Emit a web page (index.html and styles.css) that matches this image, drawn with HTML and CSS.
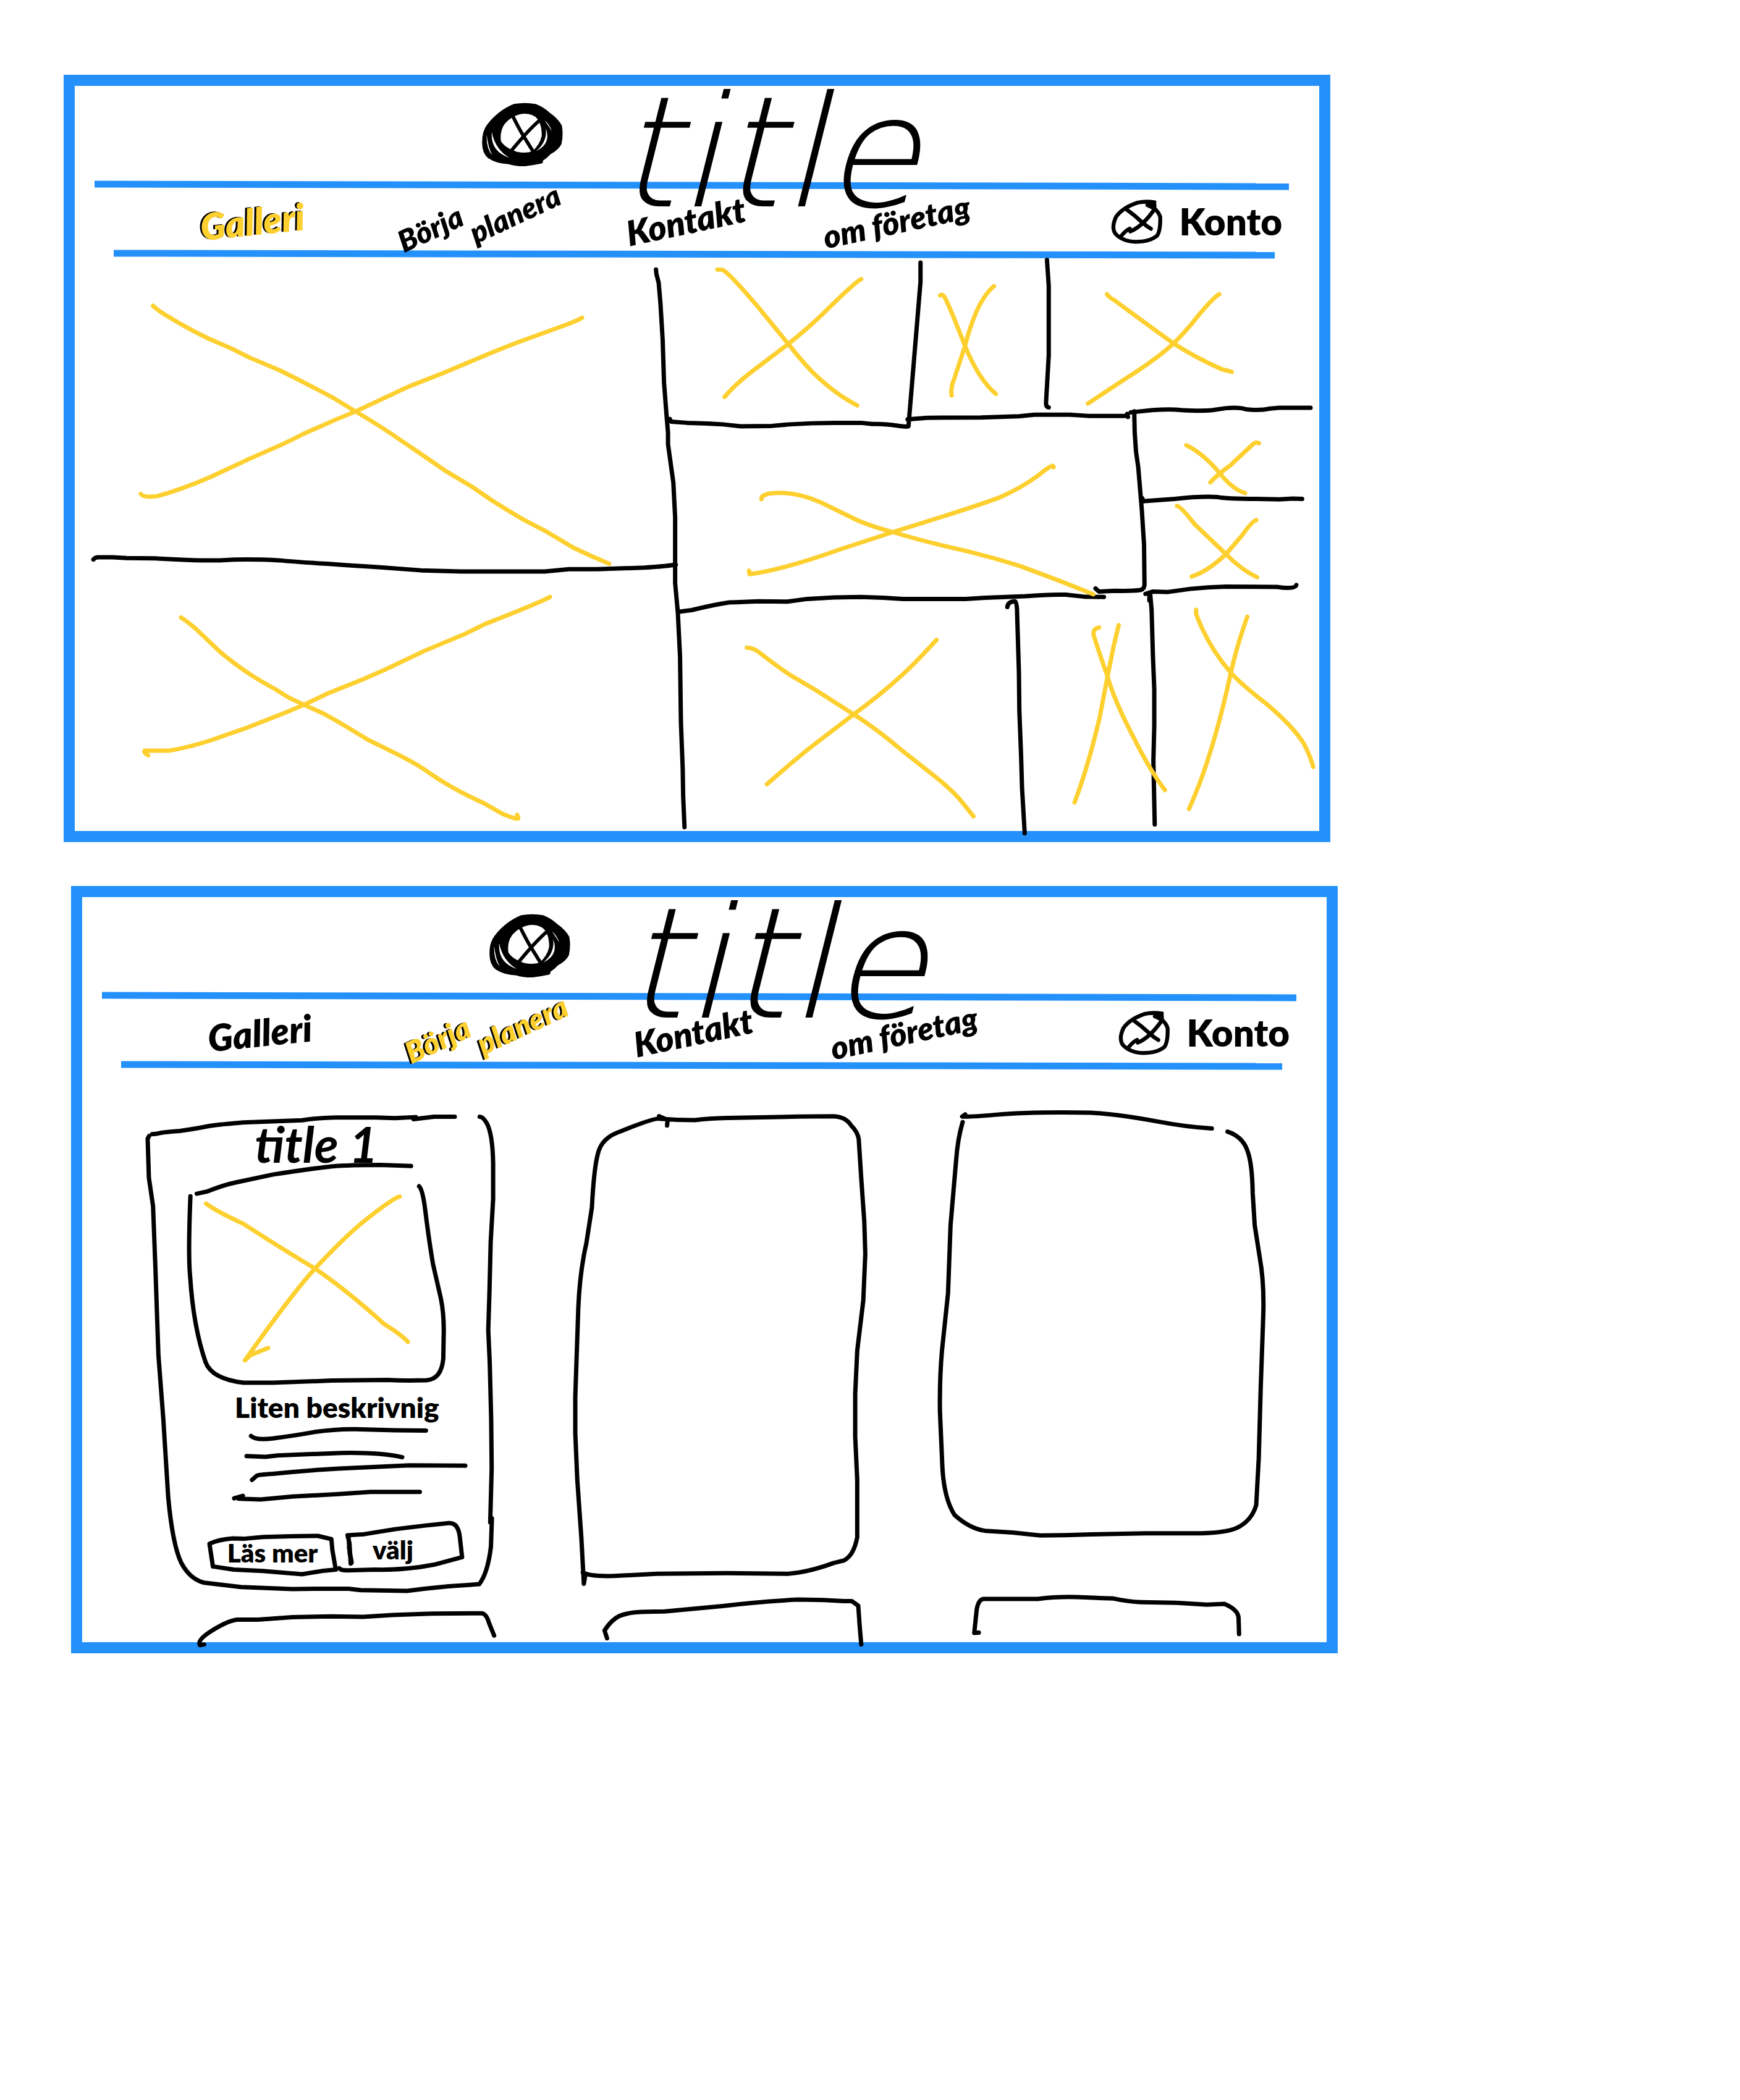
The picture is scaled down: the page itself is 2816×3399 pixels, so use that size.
FILE: index.html
```html
<!DOCTYPE html>
<html lang="sv">
<head>
<meta charset="utf-8">
<meta name="viewport" content="width=device-width, initial-scale=1">
<title>title</title>
<link rel="stylesheet" href="styles.css">
</head>
<body>
<main class="page">

<section class="board" aria-label="Galleri">
  <header class="masthead">
    <svg class="logo" viewBox="0 0 450 390" aria-hidden="true">
      <g id="logo-mark">
        <path fill="#000" fill-rule="evenodd" stroke="none" d="M185 55Q240 45 290 55Q330 70 360 98Q400 125 418 160Q426 205 416 250Q400 280 364 298Q345 318 326 330Q328 344 316 344Q280 352 240 357Q195 358 160 347Q100 345 60 318Q32 295 31 250Q28 190 55 155Q110 85 185 55ZM235 102Q280 102 300 128Q322 160 320 210Q312 250 275 285Q240 296 200 287Q140 268 122 235Q116 185 140 152Q180 106 235 102ZM53 205Q50 270 80 304Q60 265 53 205ZM78 192Q70 285 163 316Q94 275 78 192ZM334 134Q356 150 370 188Q350 156 334 134ZM340 172Q368 248 292 284Q348 240 340 172Z"/>
        <path fill="none" stroke="#000" stroke-width="17" d="M180 115Q210 175 230 208L278 285M315 130Q260 175 170 285"/>
      </g>
    </svg>
    <h1 class="wordmark">title</h1>
  </header>
  <svg class="rule" viewBox="0 0 2014 16" preserveAspectRatio="none" aria-hidden="true"><path d="M32 6L1965 10"/></svg>
  <nav class="nav" aria-label="Huvudmeny">
    <a class="link gallery-link active" href="#galleri" aria-current="page">Galleri</a>
    <a class="link plan-link" href="#planera"><span class="word">Börja</span> <span class="word raised">planera</span></a>
    <a class="link contact-link" href="#kontakt">Kontakt</a>
    <a class="link about-link" href="#foretag">om företag</a>
    <a class="link account-link" href="#konto">
      <svg class="avatar" viewBox="0 0 300 300" aria-hidden="true">
        <path id="avatar-mark" d="M262 58Q215 52 180 60Q105 85 75 130Q52 180 72 210Q105 248 170 250Q240 250 275 220Q292 195 290 130Q285 110 262 88L228 72L262 70L262 92Q205 175 145 200L142 186Q118 198 96 228M128 94Q165 120 202 155Q220 172 245 187"/>
      </svg>
      Konto
    </a>
  </nav>
  <svg class="rule" viewBox="0 0 2014 16" preserveAspectRatio="none" aria-hidden="true"><path d="M63 5L1942 8"/></svg>
  <svg class="gallery" id="galleri" viewBox="0 0 2014 924" role="img" aria-label="Bildgalleri">
    <g transform="translate(-31 -21) scale(.65689 .625)">
      <path class="ink" d="M93 809Q97 803 105 803L140 803L175 805L245 806L305 809Q350 812 405 811L440 809Q500 808 550 811Q600 816 670 820Q730 825 800 829Q860 834 900 837L1000 840L1205 840L1265 834L1335 834L1450 830Q1510 826 1528 822"/>
      <path class="cross" d="M240 152Q250 162 265 172Q320 208 375 236L430 261L480 287L550 318Q620 354 685 391L738 425Q800 463 850 500L895 532L960 579L1025 620L1075 656Q1120 686 1155 707L1210 737Q1240 756 1275 778Q1320 801 1364 820"/>
      <path class="cross" d="M1297 183Q1280 193 1250 204L1140 246Q1090 266 1050 284L955 326L870 361L740 425L685 449L610 484Q575 503 545 517L480 547L380 596Q310 628 250 645Q215 649 210 639"/>
      <path class="cross" d="M309 959Q325 970 345 988L405 1048Q440 1079 480 1107Q505 1124 540 1144L575 1167L612 1185L660 1208Q690 1224 770 1276L830 1307Q890 1338 920 1361Q960 1391 1015 1420L1055 1440L1100 1467Q1140 1484 1140 1479L1137 1470"/>
      <path class="cross" d="M1218 906Q1180 926 1060 975L1010 1001L910 1045L810 1095L760 1118L670 1156L612 1185L565 1206L470 1245L380 1278Q330 1295 280 1304L219 1304Q217 1310 228 1316"/>
    </g>
    <g transform="translate(919 -21) scale(.72066 .625)">
      <path class="ink" d="M30 58L31 70L36 92L40 145L45 240L48 350L54 440L57 480L57 510L69 610L73 700L73 870L79 945L84 1060L86 1230L90 1350L91 1420L94 1502"/>
      <path class="ink" d="M61 445L64 452L100 455Q150 456 180 459L220 464L290 463L330 459Q380 455 430 455L490 455L515 458Q545 457 570 462Q592 466 597 464L624 90L624 40"/>
      <path class="ink" d="M595 446L640 442L760 441L845 438L880 434L960 434L1000 437L1085 437L1088 432L1090 440M1096 428L1120 425L1145 422Q1185 419 1210 422Q1255 425 1280 422L1310 417Q1340 414 1355 420Q1385 424 1410 418L1430 416L1500 416"/>
      <path class="ink" d="M908 33L912 100L912 280L906 400Q905 414 912 415"/>
      <path class="ink" d="M1104 425L1105 480L1108 530L1113 570L1121 680L1126 770L1127 870Q1128 885 1118 888Q1100 891 1060 890L1025 892L1017 884M1122 650L1124 658L1195 652Q1250 645 1290 647Q1310 652 1380 652L1430 653L1460 651L1481 652"/>
      <path class="ink" d="M83 944L110 940Q160 926 195 920Q225 919 260 917L325 918L370 911Q430 906 490 906L540 908L585 911L725 911L770 908L860 904Q910 899 950 900L990 905L1036 906"/>
      <path class="ink" d="M1129 898L1145 892L1180 893L1230 885Q1270 880 1310 879L1425 880Q1465 887 1468 875M1140 900L1143 940L1146 1060L1149 1145L1149 1240L1147 1330L1150 1495M1138 915L1138 895"/>
      <path class="ink" d="M819 932Q820 918 836 917Q841 920 841 950L845 1100L846 1200L850 1320L852 1400L858 1518"/>
      <path class="cross" d="M168 58L180 59Q195 68 260 156L328 252Q355 292 380 322Q430 379 482 410M491 83Q480 87 400 178Q370 211 328 250L240 327Q205 359 184 388"/>
      <path class="cross" d="M668 125Q675 120 680 134Q690 155 724 256Q755 343 793 380M789 101Q750 138 724 256L700 340Q691 365 694 384"/>
      <path class="cross" d="M1043 122Q1046 129 1060 138Q1160 223 1193 250Q1240 285 1300 316L1323 323M1295 122Q1285 127 1250 174Q1215 226 1185 257Q1150 293 1080 344L1000 405"/>
      <path class="cross" d="M267 653Q265 643 285 638Q340 630 400 661L480 706Q510 722 562 738Q630 762 720 785Q800 808 850 827Q940 865 1012 899M923 570L921 566Q910 570 890 590Q850 624 800 649Q750 671 562 738L440 784Q320 834 240 847L239 838"/>
      <path class="cross" d="M1221 513Q1260 535 1297 587Q1325 627 1353 637M1384 508Q1378 503 1370 511L1320 565Q1290 590 1275 609M1200 670Q1208 671 1240 718L1310 795Q1345 836 1380 855M1378 707Q1370 708 1345 748L1310 795Q1270 839 1233 853"/>
      <path class="cross" d="M234 1037Q247 1037 260 1048Q300 1084 330 1107L390 1148L474 1210Q520 1243 580 1301L660 1374Q700 1411 720 1441L743 1474M660 1017Q610 1080 580 1111Q530 1163 474 1210L390 1284Q350 1319 279 1391"/>
      <path class="cross" d="M1025 985Q1010 988 1013 1005Q1020 1032 1044 1112Q1060 1176 1100 1264Q1140 1357 1173 1406M1069 979L1058 1032L1044 1112L1026 1220Q1000 1347 970 1438"/>
      <path class="cross" d="M1243 939L1243 950Q1270 1035 1321 1102Q1340 1128 1400 1182Q1460 1240 1485 1286Q1500 1320 1506 1346M1358 957Q1335 1030 1321 1102Q1280 1320 1227 1455"/>
    </g>
  </svg>
</section>

<section class="board second" aria-label="Börja planera">
  <header class="masthead">
    <svg class="logo" viewBox="0 0 450 390" aria-hidden="true"><use href="#logo-mark"/></svg>
    <h1 class="wordmark">title</h1>
  </header>
  <svg class="rule" viewBox="0 0 2014 16" preserveAspectRatio="none" aria-hidden="true"><path d="M32 6L1965 10"/></svg>
  <nav class="nav" aria-label="Huvudmeny">
    <a class="link gallery-link" href="#galleri">Galleri</a>
    <a class="link plan-link active" href="#planera" aria-current="page"><span class="word">Börja</span> <span class="word raised">planera</span></a>
    <a class="link contact-link" href="#kontakt">Kontakt</a>
    <a class="link about-link" href="#foretag">om företag</a>
    <a class="link account-link" href="#konto">
      <svg class="avatar" viewBox="0 0 300 300" aria-hidden="true"><use href="#avatar-mark"/></svg>
      Konto
    </a>
  </nav>
  <svg class="rule" viewBox="0 0 2014 16" preserveAspectRatio="none" aria-hidden="true"><path d="M63 5L1942 8"/></svg>
  <div class="cards" id="planera">
    <article class="card">
      <svg class="frame" viewBox="0 0 570 784" preserveAspectRatio="none" aria-hidden="true">
        <g transform="translate(-17 -15) scale(.3954 .574)">
          <path class="ink" d="M66 97L85 96Q110 91 180 88Q250 81 300 74Q350 69 440 64L680 58Q740 51 820 50L980 50L1060 52L1145 49L1136 55L1220 48L1305 48"/>
          <path class="ink" d="M1407 48Q1420 48 1435 65Q1460 95 1462 180L1462 280L1452 400L1447 540L1442 650L1448 740L1454 900L1456 1040L1450 1192L1457 1180L1453 1260Q1440 1335 1405 1366L1280 1372L1180 1379L1110 1385L920 1383L870 1379L740 1379L640 1380L430 1374L280 1362Q220 1352 185 1305Q150 1255 132 1120L112 900L92 720L80 480L70 300L53 220L48 110L54 102"/>
        </g>
      </svg>
      <h2 class="card-title">title 1</h2>
      <svg class="picture" viewBox="0 0 417 356" role="img" aria-label="Bild">
        <g transform="translate(-84 -106) scale(.3954 .574)">
          <path class="ink" d="M249 265L290 259Q360 240 410 233L560 211Q720 194 800 188Q880 184 1000 184L1126 187"/>
          <path class="ink" d="M1159 244Q1172 252 1182 300Q1200 400 1216 464L1248 560Q1260 600 1260 650L1258 730Q1250 788 1190 791Q1100 793 1030 790L800 792L560 798L440 798Q310 787 285 740Q235 640 222 500Q213 440 223 272"/>
          <path class="cross" d="M287 293Q330 315 440 350Q580 413 733 476Q870 541 1015 632Q1090 664 1113 683M1080 273Q1050 278 920 350Q840 397 733 476Q640 546 446 735L470 720L541 700"/>
        </g>
      </svg>
      <p class="caption">Liten beskrivnig</p>
      <svg class="copy" viewBox="0 0 378 117" aria-hidden="true">
        <g transform="translate(-157 -533) scale(.3954 .574)">
          <path class="ink" d="M471 948Q490 961 560 955Q660 946 730 937Q820 928 900 929L1060 932L1187 933M453 1005L530 1007L580 1003L840 996Q1000 994 1090 1008M475 1072L495 1060Q505 1057 560 1055Q700 1045 830 1040L1120 1031L1348 1032M402 1124L438 1117L420 1125L510 1127L640 1119L830 1112L960 1106L1162 1106"/>
        </g>
      </svg>
      <div class="actions">
        <button class="button wide" type="button">
          <svg class="frame" viewBox="0 0 208 87" preserveAspectRatio="none" aria-hidden="true">
            <g transform="translate(-117 -683) scale(.3954 .574)"><path class="ink" d="M315 1316L301 1252Q340 1240 395 1237L440 1238L520 1233L640 1231L745 1230L800 1239L804 1270L818 1325L760 1329L680 1338L520 1329L400 1325L315 1316"/></g>
          </svg>Läs mer</button>
        <button class="button" type="button">
          <svg class="frame" viewBox="0 0 204 87" preserveAspectRatio="none" aria-hidden="true">
            <g transform="translate(-327 -683) scale(.3954 .574)"><path class="ink" d="M879 1308L874 1250L866 1228L935 1225L1060 1211L1180 1201L1280 1194Q1320 1192 1326 1235L1335 1290L1220 1311Q1100 1327 980 1325L870 1327Q840 1328 832 1321M870 1230L875 1280L883 1305L872 1262"/></g>
          </svg>välj</button>
      </div>
    </article>
    <article class="card">
      <svg class="frame" viewBox="0 0 475 784" preserveAspectRatio="none" aria-hidden="true">
        <g transform="translate(-27 -15) scale(.8163 .5804)"><path class="ink" d="M220 72L221 56L204 46L205 53Q195 50 130 87Q90 105 83 150Q75 190 71 300L60 400Q47 480 44 580L38 830L38 930L42 1060L50 1220L55 1350L58 1325L53 1318Q65 1330 115 1328L200 1322L340 1320L460 1322Q500 1318 550 1292L570 1285Q590 1272 597 1220L597 1060L593 940L593 820L597 700L609 560L613 430L611 340L605 220L600 110Q598 90 585 72Q575 48 550 46L480 47L340 51Q300 52 275 57Q240 57 205 53"/></g>
      </svg>
    </article>
    <article class="card">
      <svg class="frame" viewBox="0 0 531 784" preserveAspectRatio="none" aria-hidden="true">
        <g transform="translate(-622 -15) scale(.8163 .5804)"><path class="ink" d="M811 41L805 47Q825 48 870 42Q940 33 1060 36Q1110 40 1190 60Q1250 76 1300 80M1331 89Q1360 102 1370 140Q1380 175 1381 260L1385 350L1395 440Q1404 510 1402 600L1397 800L1393 1000L1388 1130Q1380 1170 1355 1190Q1335 1207 1280 1209L1170 1209L1060 1212Q1010 1215 960 1215L905 1207L850 1202Q820 1196 790 1158Q770 1115 766 1030L761 870Q760 780 765 700L777 540L782 350L793 170Q796 110 806 62"/></g>
      </svg>
    </article>
    <article class="card">
      <svg class="frame" viewBox="0 0 570 73" preserveAspectRatio="none" aria-hidden="true">
        <g transform="translate(-17 -805) scale(.3954 .574)"><path class="ink" d="M279 1536L262 1538Q250 1525 300 1502Q370 1470 415 1466L500 1466L640 1459L800 1457L930 1458L1050 1453L1210 1449L1415 1448Q1435 1450 1445 1475L1466 1511"/></g>
      </svg>
    </article>
    <article class="card">
      <svg class="frame" viewBox="0 0 475 73" preserveAspectRatio="none" aria-hidden="true">
        <g transform="translate(-27 -805) scale(.8163 .5804)"><path class="ink" d="M101 1502L96 1480Q110 1450 125 1440Q145 1428 180 1428L215 1427L330 1412Q400 1400 480 1394L530 1395L570 1398L586 1398L599 1411L602 1470L605 1519"/></g>
      </svg>
    </article>
    <article class="card">
      <svg class="frame" viewBox="0 0 531 73" preserveAspectRatio="none" aria-hidden="true">
        <g transform="translate(-622 -805) scale(.8163 .5804)"><path class="ink" d="M838 1486L829 1487L834 1420Q838 1392 848 1392L955 1392Q1000 1384 1050 1388L1105 1391Q1135 1400 1160 1401L1230 1403L1290 1408L1325 1406Q1352 1422 1353 1445L1354 1490"/></g>
      </svg>
    </article>
  </div>
</section>

</main>
</body>
</html>
```

FILE: styles.css
```css
:root {
  --blue: #2491fb;
  --yellow: #fdd030;
  --ink: #000;
}

* {
  box-sizing: border-box;
}

body {
  margin: 0;
  background: #fff;
  color: var(--ink);
  font-family: Lato, "Open Sans", sans-serif;
}

svg {
  display: block;
  overflow: visible;
}

.page {
  display: flex;
  flex-direction: column;
  gap: 71px;
  padding: 121px 0 121px 103px;
}

.board {
  width: 72.8vw;
  border: 18px solid var(--blue);
}

.second {
  margin-left: 12px;
}

/* Strokes */

.ink,
.cross {
  fill: none;
  stroke: var(--ink);
  stroke-width: 7px;
  stroke-linecap: round;
  stroke-linejoin: round;
  vector-effect: non-scaling-stroke;
}

.cross {
  stroke: var(--yellow);
}

.rule {
  width: 100%;
  height: 16px;
}

.rule path {
  fill: none;
  stroke: var(--blue);
  stroke-width: 11px;
}

/* Header */

.masthead {
  position: relative;
  z-index: 1;
  display: flex;
  align-items: flex-start;
  justify-content: center;
  gap: 78px;
  height: 153px;
  padding-top: 11px;
}

.logo {
  flex: none;
  width: 150px;
  height: 130px;
}

.wordmark {
  margin: 0;
  font-family: "DejaVu Sans Light", "DejaVu Sans", sans-serif;
  font-size: 250px;
  font-style: italic;
  font-weight: 200;
  line-height: 196px;
}

.nav {
  display: grid;
  grid-template-columns: 316fr 418fr 250fr 432fr 468fr;
  align-items: center;
  justify-items: center;
  height: 97px;
  padding-left: 130px;
}

.link {
  color: var(--ink);
  font-size: 60px;
  font-style: italic;
  font-weight: 800;
  line-height: 64px;
  text-decoration: none;
}

.active {
  color: var(--yellow);
  text-shadow: -3px -1px 0 var(--ink);
}

.gallery-link {
  transform: rotate(-6deg);
}

.plan-link {
  display: flex;
  align-items: flex-end;
  gap: 4px;
  font-size: 48px;
}

.word {
  transform: rotate(-25deg);
}

.raised {
  margin-bottom: 24px;
}

.contact-link,
.about-link {
  font-size: 52px;
  transform: rotate(-12deg);
}

.contact-link {
  font-size: 56px;
}

.account-link {
  display: flex;
  align-items: center;
  justify-self: end;
  gap: 28px;
  padding-right: 60px;
  font-style: normal;
}

.avatar {
  width: 100px;
  height: 100px;
}

.avatar path,
.avatar use {
  fill: none;
  stroke: var(--ink);
  stroke-width: 19px;
  stroke-linecap: round;
  stroke-linejoin: round;
}

/* Gallery */

.gallery {
  width: 100%;
  height: auto;
}

/* Cards */

.cards {
  display: grid;
  grid-template-columns: 570fr 475fr 531fr;
  grid-template-rows: minmax(784px, auto) 73px;
  gap: 6px 120px;
  padding: 61px 94px 0 104px;
}

.card {
  position: relative;
}

.frame {
  position: absolute;
  inset: 0;
  width: 100%;
  height: 100%;
  pointer-events: none;
}

.card-title {
  margin: 0;
  padding: 21px 20px 0 0;
  font-size: 80px;
  font-style: italic;
  font-weight: 700;
  line-height: 70px;
  text-align: center;
}

.picture {
  width: 417px;
  height: 356px;
  margin-left: 67px;
}

.caption {
  margin: 0;
  padding-left: 143px;
  font-size: 46px;
  font-weight: 800;
  line-height: 71px;
}

.copy {
  width: 378px;
  height: 117px;
  margin-left: 140px;
}

.actions {
  display: flex;
  gap: 2px;
  padding: 33px 0 0 100px;
}

.button {
  position: relative;
  width: 204px;
  height: 87px;
  padding: 2px 26px 0 0;
  border: 0;
  background: none;
  color: var(--ink);
  font: 800 42px/48px Lato, "Open Sans", sans-serif;
  text-align: center;
}

.wide {
  width: 208px;
  padding: 12px 0 0;
}
```
